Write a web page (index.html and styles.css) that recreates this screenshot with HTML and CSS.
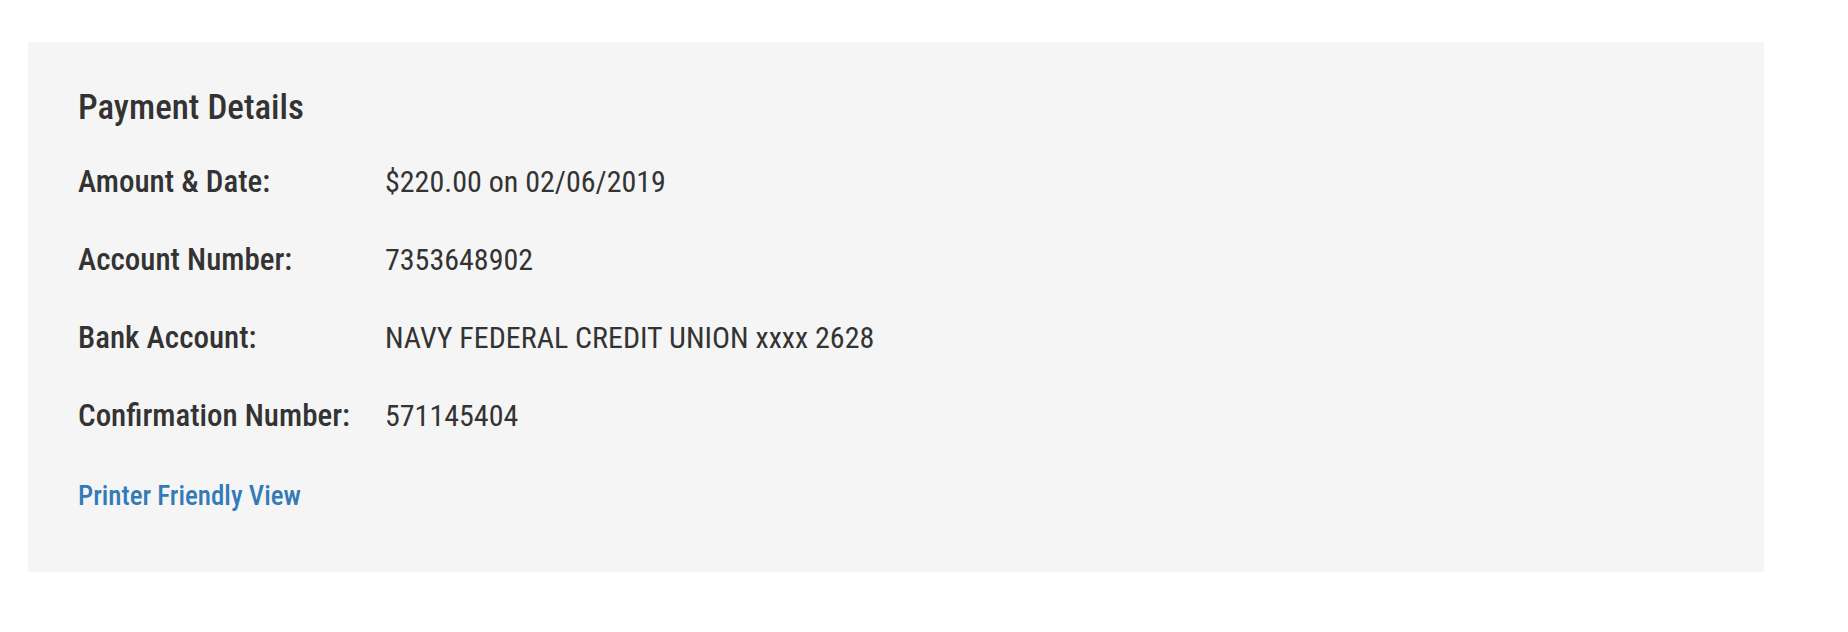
FILE: index.html
```html
<!DOCTYPE html>
<html lang="en">
<head>
<meta charset="utf-8">
<title>Payment Details</title>
<link rel="stylesheet" href="styles.css">
</head>
<body>
<section class="panel">
  <h2 class="panel-title">Payment Details</h2>
  <dl class="details">
    <div class="row">
      <dt class="label">Amount &amp; Date:</dt>
      <dd class="value">$220.00 on 02/06/2019</dd>
    </div>
    <div class="row">
      <dt class="label">Account Number:</dt>
      <dd class="value">7353648902</dd>
    </div>
    <div class="row">
      <dt class="label">Bank Account:</dt>
      <dd class="value">NAVY FEDERAL CREDIT UNION xxxx 2628</dd>
    </div>
    <div class="row">
      <dt class="label">Confirmation Number:</dt>
      <dd class="value">571145404</dd>
    </div>
  </dl>
  <a class="print-link" href="#">Printer Friendly View</a>
</section>
</body>
</html>
```

FILE: styles.css
```css
html, body {
  margin: 0;
  padding: 0;
  background: #ffffff;
}

body {
  font-family: "Roboto Condensed", Roboto, "Liberation Sans", sans-serif;
  font-stretch: condensed;
  color: #333333;
  padding: 42px 0 0 28px;
}

.panel {
  width: 1736px;
  box-sizing: border-box;
  background: #f5f5f5;
  padding: 46px 50px 58px 50px;
  display: flex;
  flex-direction: column;
  align-items: flex-start;
}

.panel-title {
  margin: 0;
  font-weight: 500;
  font-size: 35px;
  line-height: 40px;
  color: #333333;
}

.details {
  margin: 36px 0 0 0;
  display: flex;
  flex-direction: column;
  gap: 42px;
}

.row {
  display: flex;
  align-items: baseline;
  height: 36px;
}

.label {
  width: 307px;
  flex: none;
  white-space: nowrap;
  font-weight: 500;
  font-size: 31px;
  line-height: 36px;
}

.value {
  margin: 0;
  white-space: nowrap;
  font-weight: 400;
  font-size: 30px;
  line-height: 36px;
}

.print-link {
  margin-top: 44px;
  font-weight: 500;
  font-size: 27px;
  line-height: 36px;
  color: #337ab7;
  text-decoration: none;
}
```
